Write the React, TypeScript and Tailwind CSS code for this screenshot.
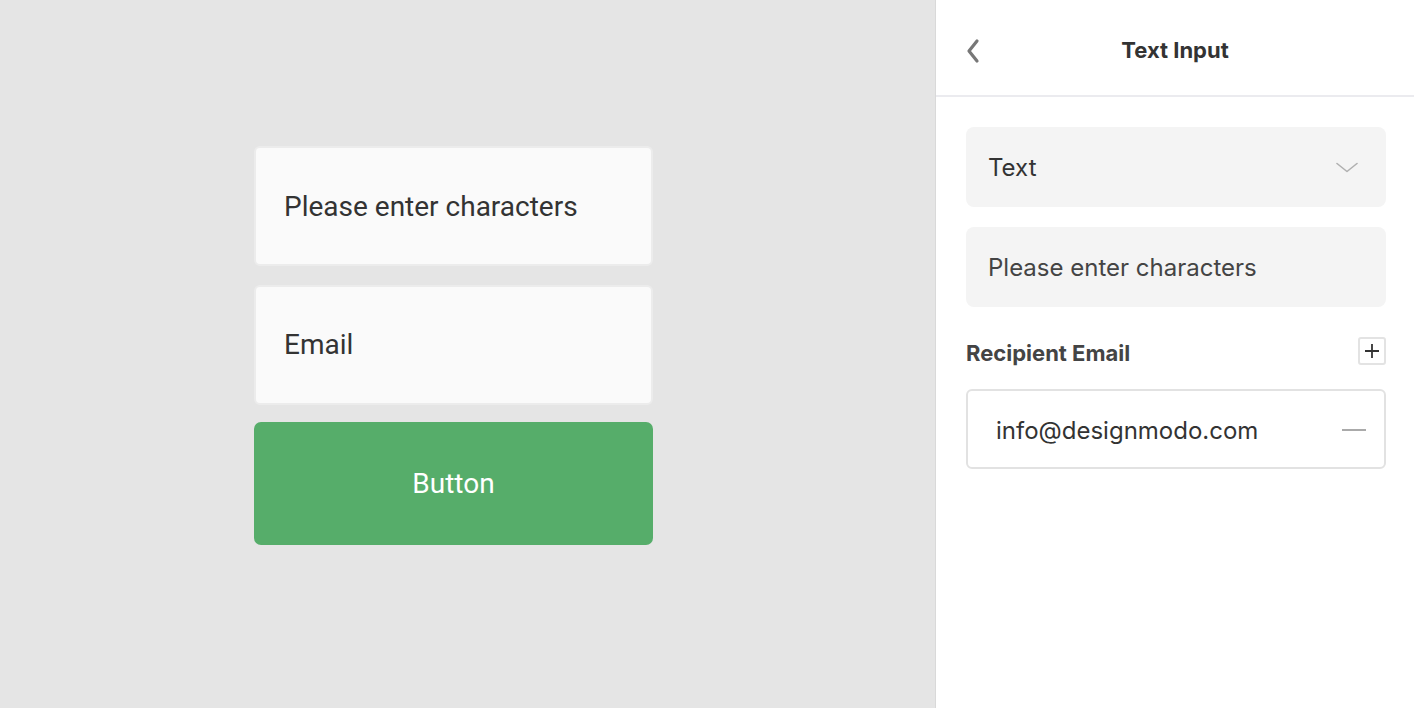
import React from "react";

export default function App() {
  return (
    <div className="flex h-[708px] w-[1414px] overflow-hidden">
      {/* Canvas */}
      <div className="h-full w-[936px] shrink-0 border-r border-[#d9d9d9] bg-[#e5e5e5]" style={{ fontFamily: "Roboto, 'Noto Sans', sans-serif" }}>
        <div className="ml-[254px] mt-[146px] flex w-[399px] flex-col">
          <div className="flex h-[120px] items-center rounded-[6px] border-2 border-[#ececec] bg-[#fafafa] pl-[28px] pt-[2px] text-[28px] text-[#333333]">
            Please enter characters
          </div>
          <div className="mt-[19px] flex h-[120px] items-center rounded-[6px] border-2 border-[#ececec] bg-[#fafafa] pl-[28px] text-[28px] text-[#333333]">
            Email
          </div>
          <div className="mt-[17px] flex h-[123px] items-center justify-center rounded-[7px] bg-[#56ad6a] text-[28px] text-white">
            Button
          </div>
        </div>
      </div>

      {/* Panel */}
      <div className="flex-1 bg-white" style={{ fontFamily: "Inter, 'Noto Sans', sans-serif" }}>
        <div className="grid h-[97px] grid-cols-[1fr_auto_1fr] items-center border-b-2 border-[#ebebef] pl-[30px] pr-[28px] pt-[6px]">
          <div className="flex items-center">
            <svg width="14" height="26" viewBox="0 0 14 26" fill="none">
              <path d="M11 3 L3 13 L11 23" stroke="#777777" strokeWidth="3.2" strokeLinecap="round" strokeLinejoin="round" />
            </svg>
          </div>
          <div className="pr-[2px] text-[22px] font-bold text-[#333333]">Text Input</div>
          <div />
        </div>

        <div className="flex flex-col pl-[30px] pr-[28px] pt-[30px]">
          <div className="flex h-[80px] items-center justify-between rounded-[8px] bg-[#f4f4f4] pl-[22px] pr-[28px]">
            <span className="pt-[1px] text-[24px] text-[#333333]">Text</span>
            <svg width="22" height="11" viewBox="0 0 22 11" fill="none">
              <path d="M1 1.5 L11 9.5 L21 1.5" stroke="#b0b0b0" strokeWidth="1.6" strokeLinecap="round" strokeLinejoin="round" />
            </svg>
          </div>
          <div className="mt-[20px] flex h-[80px] items-center rounded-[8px] bg-[#f4f4f4] pl-[22px] pt-[2px]">
            <span className="text-[24px] text-[#444444]">Please enter characters</span>
          </div>

          <div className="mt-[30px] flex h-[28px] items-center justify-between">
            <span className="pt-[4px] text-[22px] font-bold text-[#444444]">Recipient Email</span>
            <div className="flex h-[28px] w-[28px] items-center justify-center rounded-[3px] border-2 border-[#e3e3e3]">
              <svg width="16" height="16" viewBox="0 0 16 16" fill="none">
                <path d="M8 1 V15 M1 8 H15" stroke="#333333" strokeWidth="1.8" />
              </svg>
            </div>
          </div>

          <div className="mt-[24px] flex h-[80px] items-center justify-between rounded-[6px] border-2 border-[#e2e2e2] bg-white pl-[28px] pr-[18px]">
            <span className="pt-[3px] text-[24px] text-[#333333]">info@designmodo.com</span>
            <div className="mt-[2px] h-[2px] w-[24px] bg-[#aaaaaa]" />
          </div>
        </div>
      </div>
    </div>
  );
}
